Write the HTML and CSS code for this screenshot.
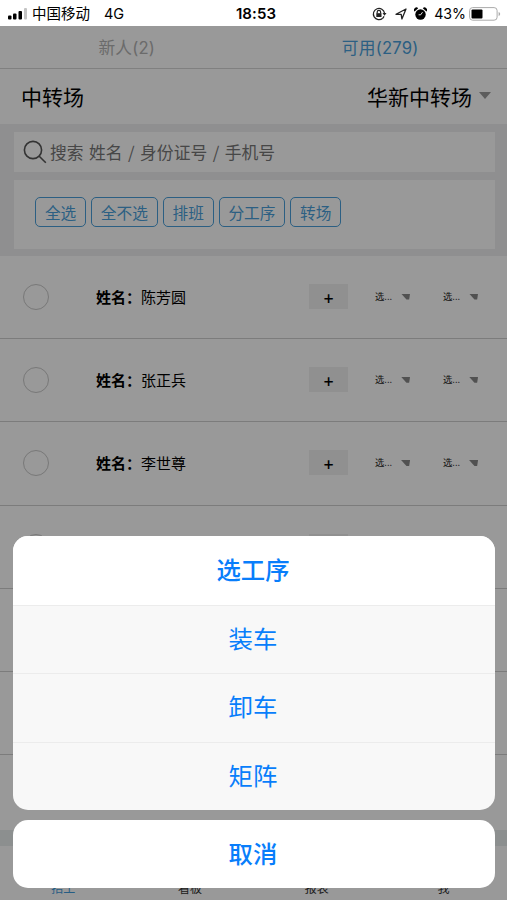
FILE: index.html
```html
<!DOCTYPE html>
<html lang="zh-CN">
<head>
<meta charset="utf-8">
<title>中转场</title>
<link rel="stylesheet" href="styles.css">
</head>
<body>
<div class="phone">
  <header class="status">
    <div class="status-left">
      <svg class="signal" width="20" height="12" viewBox="0 0 20 12"><rect x="0" y="7.500" width="3.500" height="4" rx="1"/><rect x="5" y="5.500" width="3.500" height="6" rx="1"/><rect x="10.500" y="3" width="3.500" height="8.500" rx="1"/><rect x="16" y="0" width="3" height="11.500" rx="1" fill="#c4c4c4"/></svg>
      <span class="carrier">中国移动</span><span class="net">4G</span>
    </div>
    <div class="clock">18:53</div>
    <div class="status-right">
      <svg class="lock" width="15" height="14" viewBox="0 0 15 14" fill="none" stroke="#222" stroke-width="1.200"><path d="M10.700 11.200A5.600 5.600 0 1 1 12.500 6.200"/><path d="M10.500 6h4l-2 2.800z" fill="#222" stroke="none"/><path d="M12 9.200a5.600 5.600 0 0 1-1.300 2"/><path d="M5.200 6.500V5a1.700 1.700 0 0 1 3.400 0v1.500"/><rect x="4.300" y="6.200" width="5.200" height="3.800" fill="#222" stroke="none"/></svg>
      <svg class="loc" width="12" height="12" viewBox="0 0 12 12" fill="none" stroke="#222" stroke-width="1.300" stroke-linejoin="round"><path d="M1 6.300L11 1 6.900 11 6.200 6.300z"/></svg>
      <svg class="alarm" width="13" height="14" viewBox="0 0 13 14"><circle cx="6.500" cy="7.500" r="5.200"/><path d="M.6 4.600A2.300 2.300 0 0 1 4.200 1.300zM12.400 4.600A2.300 2.300 0 0 0 8.800 1.300z"/><path d="M8.500 5.200L6.700 7.800H4.600" fill="none" stroke="#fff" stroke-width=".9"/></svg>
      <span class="pct">43%</span>
      <svg class="battery" width="32" height="14" viewBox="0 0 32 14"><rect x=".6" y=".6" width="27.500" height="12.600" rx="3" fill="#fff" stroke="#aaa"/><rect x="2.500" y="2.500" width="11" height="9" rx="1"/><path d="M29.600 5v4q1.600-.6 1.600-2t-1.600-2z" fill="#aaa"/></svg>
    </div>
  </header>
  <main class="app">
    <nav class="tabs"><span class="tab">新人(2)</span><span class="tab tab-on">可用(279)</span></nav>
    <div class="site"><span>中转场</span><span class="site-pick">华新中转场<i class="caret"></i></span></div>
    <section class="tools">
      <div class="search">
        <svg width="24" height="24" viewBox="0 0 24 24" fill="none" stroke="#555" stroke-width="1.600"><circle cx="10" cy="10" r="8.600"/><path d="M16 16l6.800 6.800"/></svg>
        <span>搜索 姓名 / 身份证号 / 手机号</span>
      </div>
      <div class="actions"><button>全选</button><button>全不选</button><button>排班</button><button>分工序</button><button>转场</button></div>
    </section>
    <section class="list">
      <div class="row"><i class="radio"></i><b>姓名：</b><span class="name">陈芳圆</span><span class="plus">+</span><span class="pick">选...<i></i></span><span class="pick">选...<i></i></span></div>
      <div class="row"><i class="radio"></i><b>姓名：</b><span class="name">张正兵</span><span class="plus">+</span><span class="pick">选...<i></i></span><span class="pick">选...<i></i></span></div>
      <div class="row"><i class="radio"></i><b>姓名：</b><span class="name">李世尊</span><span class="plus">+</span><span class="pick">选...<i></i></span><span class="pick">选...<i></i></span></div>
      <div class="row"><i class="radio"></i><b></b><span class="name"></span><span class="plus"></span></div>
      <div class="row"></div>
      <div class="row"></div>
      <div class="row row-last"></div>
    </section>
    <nav class="bottom"><span class="on">招工</span><span>看板</span><span>报表</span><span>我</span></nav>
  </main>
  <div class="overlay">
    <div class="sheet"><div class="opt opt-title">选工序</div><div class="opt">装车</div><div class="opt">卸车</div><div class="opt">矩阵</div></div>
    <div class="sheet cancel">取消</div>
  </div>
</div>
</body>
</html>
```
FILE: styles.css
```css
* { box-sizing: border-box; }
body { margin: 0; font-family: "Noto Sans CJK SC", sans-serif; color: #000; }
.phone { position: relative; width: 507px; height: 900px; overflow: hidden; background: #fff; display: flex; flex-direction: column; }
.status { height: 26px; flex: none; display: grid; grid-template-columns: 1fr auto 1fr; align-items: center; padding: 2px 6px 0 8px; font-family: Inter, "Noto Sans CJK SC", sans-serif; font-size: 14.5px; line-height: 22px; }
.status-left, .status-right { display: flex; align-items: center; }
.status-right { justify-content: flex-end; }
.carrier { margin-left: 4px; }
.net { margin-left: 14px; }
.clock { font-weight: 600; font-size: 15px; padding-left: 3px; letter-spacing: .1px; }
.lock { margin-right: -1px; }
.loc { margin-left: 9px; }
.alarm { margin-left: 7px; }
.pct { margin: 0 3px 0 7px; font-size: 14.2px; }
.app { height: 874px; flex: none; display: flex; flex-direction: column; }
.tabs { height: 43px; flex: none; display: grid; grid-template-columns: 1fr 1fr; border-bottom: 1px solid #d5d5d5; }
.tab { text-align: center; font-family: Inter, "Noto Sans CJK SC", sans-serif; font-size: 16.7px; letter-spacing: .2px; line-height: 45px; color: #b2b2b2; }
.tab-on { color: #4a9fda; }
.site { height: 55px; flex: none; display: flex; justify-content: space-between; align-items: center; padding: 0 16px 2px 21px; font-size: 21px; }
.site-pick { display: flex; align-items: center; }
.caret { margin: -1px 0 0 7px; border: 6px solid transparent; border-top: 7px solid #999; border-bottom: 0; }
.tools { height: 132px; flex: none; background: #eeeff0; padding: 8px 12px 7px 14px; display: flex; flex-direction: column; gap: 8px; }
.search { height: 40px; background: #fff; display: flex; align-items: center; padding-left: 9px; gap: 3px; font-size: 16.8px; word-spacing: 1.700px; color: #777; }
.actions { height: 69px; background: #fff; padding: 17px 21px; display: flex; gap: 4.800px; }
.actions button { height: 30px; padding: 0 8.900px; border: 1.500px solid #4a9fda; border-radius: 5px; background: none; font: 15.7px/27px "Noto Sans CJK SC", sans-serif; color: #4a9fda; white-space: nowrap; }
.list { flex: none; background: #fff; }
.row { height: 83.200px; border-bottom: 1.500px solid #cfcfcf; display: flex; align-items: center; padding-left: 23px; font-size: 15px; }
.row-last { height: 75px; border: 0; }
.radio { width: 26px; height: 26px; border: 1.300px solid #c8c8c8; border-radius: 50%; }
.row b { width: 45px; margin-left: 47px; padding-bottom: 2px; font-weight: 700; white-space: nowrap; }
.name { width: 168px; padding-bottom: 2px; }
.plus { width: 39px; height: 25px; margin-top: -1px; background: #f0f0f0; text-align: center; font: 500 17px/27px "Noto Sans CJK SC", sans-serif; }
.pick { width: 43px; margin-left: 27px; padding-bottom: 2px; display: flex; align-items: center; font-size: 9.300px; color: #222; }
.pick + .pick { margin-left: 25px; }
.pick i { width: 9px; height: 6px; margin: 1px 0 0 9px; background: #888; clip-path: polygon(0 0, 100% 0, 90% 100%, 60% 100%); }
.bottom { flex: 1; display: grid; grid-template-columns: repeat(4, 1fr); border-top: 16px solid #eaeeef; padding-top: 33px; font-size: 12px; line-height: 18px; text-align: center; }
.bottom span { color: #333; }
.bottom span.on { color: #3f9bdc; }
.overlay { position: absolute; inset: 26px 0 0; background: rgba(0,0,0,.4); padding: 0 12px 12px 13px; display: flex; flex-direction: column; justify-content: flex-end; gap: 10px; }
.sheet { background: #f8f8f8; border-radius: 15px; overflow: hidden; color: #087efb; font-size: 24.4px; text-align: center; }
.opt { height: 68.400px; line-height: 64px; padding-right: 2px; border-top: 1px solid #ececec; }
.opt-title { height: 68.600px; line-height: 66px; background: #fff; border: 0; font-weight: 500; }
.cancel { height: 68px; flex: none; line-height: 66px; padding-right: 2px; background: #fff; font-weight: 500; }
```
